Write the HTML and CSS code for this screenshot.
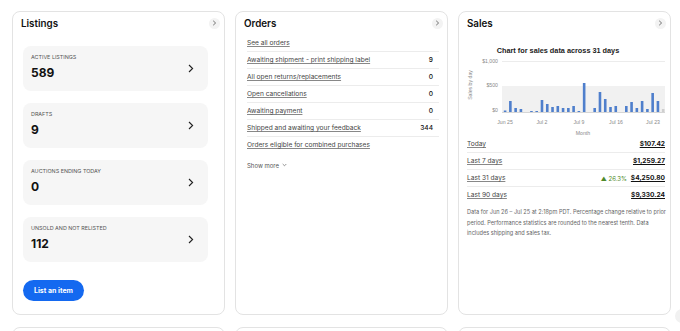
FILE: index.html
```html
<!DOCTYPE html>
<html lang="en">
<head>
    <meta charset="UTF-8">
    <meta name="viewport" content="width=device-width, initial-scale=1.0">
    <title>Seller Hub Overview</title>
    <link rel="stylesheet" href="styles.css">
</head>

<body>
    <div class="dashboard">
        <!-- Listings -->
        <section class="card card-listings">
            <div class="card-header">
                <h2>Listings</h2>
                <span class="round-btn"><svg width="5" height="6" viewBox="0 0 5 6"><path d="M1.2 0.8 L3.6 3 L1.2 5.2" fill="none" stroke="#666" stroke-width="0.9"/></svg></span>
            </div>

            <div class="tiles">
                <a class="tile" href="#">
                    <div>
                        <div class="tile-label">Active listings</div>
                        <div class="tile-value">589</div>
                    </div>
                    <svg class="tile-arrow" width="6" height="9" viewBox="0 0 6 9"><path d="M1 1 L4.6 4.5 L1 8" fill="none" stroke="#222" stroke-width="1.1"/></svg>
                </a>
                <a class="tile" href="#">
                    <div>
                        <div class="tile-label">Drafts</div>
                        <div class="tile-value">9</div>
                    </div>
                    <svg class="tile-arrow" width="6" height="9" viewBox="0 0 6 9"><path d="M1 1 L4.6 4.5 L1 8" fill="none" stroke="#222" stroke-width="1.1"/></svg>
                </a>
                <a class="tile" href="#">
                    <div>
                        <div class="tile-label">Auctions ending today</div>
                        <div class="tile-value">0</div>
                    </div>
                    <svg class="tile-arrow" width="6" height="9" viewBox="0 0 6 9"><path d="M1 1 L4.6 4.5 L1 8" fill="none" stroke="#222" stroke-width="1.1"/></svg>
                </a>
                <a class="tile" href="#">
                    <div>
                        <div class="tile-label">Unsold and not relisted</div>
                        <div class="tile-value">112</div>
                    </div>
                    <svg class="tile-arrow" width="6" height="9" viewBox="0 0 6 9"><path d="M1 1 L4.6 4.5 L1 8" fill="none" stroke="#222" stroke-width="1.1"/></svg>
                </a>
            </div>

            <button class="primary-btn">List an item</button>
        </section>

        <!-- Orders -->
        <section class="card card-orders">
            <div class="card-header">
                <h2>Orders</h2>
                <span class="round-btn"><svg width="5" height="6" viewBox="0 0 5 6"><path d="M1.2 0.8 L3.6 3 L1.2 5.2" fill="none" stroke="#666" stroke-width="0.9"/></svg></span>
            </div>

            <ul class="rows">
                <li><a href="#">See all orders</a></li>
                <li><a href="#">Awaiting shipment - print shipping label</a><span class="num">9</span></li>
                <li><a href="#">All open returns/replacements</a><span class="num">0</span></li>
                <li><a href="#">Open cancellations</a><span class="num">0</span></li>
                <li><a href="#">Awaiting payment</a><span class="num">0</span></li>
                <li><a href="#">Shipped and awaiting your feedback</a><span class="num">344</span></li>
                <li><a href="#">Orders eligible for combined purchases</a></li>
            </ul>
            <div class="show-more">Show more <svg width="5" height="4" viewBox="0 0 5 4"><path d="M0.7 1 L2.5 2.8 L4.3 1" fill="none" stroke="#666" stroke-width="0.7"/></svg></div>
        </section>

        <!-- Sales -->
        <section class="card card-sales">
            <div class="card-header">
                <h2>Sales</h2>
                <span class="round-btn"><svg width="5" height="6" viewBox="0 0 5 6"><path d="M1.2 0.8 L3.6 3 L1.2 5.2" fill="none" stroke="#666" stroke-width="0.9"/></svg></span>
            </div>

            <svg class="chart" width="211" height="96" viewBox="0 0 211 96">
                <text x="99" y="12.6" class="chart-title" text-anchor="middle">Chart for sales data across 31 days</text>
                <line x1="43" y1="21.5" x2="206" y2="21.5" stroke="#ececec" stroke-width="1"/>
                <rect x="43" y="46" width="163" height="26" fill="#f1f1f1"/>
                <text x="39" y="23" class="axis" text-anchor="end">$1,000</text>
                <text x="39" y="47" class="axis" text-anchor="end">$500</text>
                <text x="39" y="72" class="axis" text-anchor="end">$0</text>
                <text class="axis" text-anchor="middle" transform="translate(13 45) rotate(-90)">Sales by day</text>
                <g id="bars"></g>
                <line x1="43" y1="72.5" x2="206" y2="72.5" stroke="#d6d6d6" stroke-width="1"/>
                <text x="46" y="84" class="axis" text-anchor="middle">Jun 25</text>
                <text x="83" y="84" class="axis" text-anchor="middle">Jul 2</text>
                <text x="120" y="84" class="axis" text-anchor="middle">Jul 9</text>
                <text x="157" y="84" class="axis" text-anchor="middle">Jul 16</text>
                <text x="194" y="84" class="axis" text-anchor="middle">Jul 23</text>
                <text x="124" y="95" class="axis" text-anchor="middle">Month</text>
            </svg>

            <ul class="rows sales-rows">
                <li><a href="#">Today</a><span class="amount">$107.42</span></li>
                <li><a href="#">Last 7 days</a><span class="amount">$1,259.27</span></li>
                <li><a href="#">Last 31 days</a><span class="trend">&#9650; 26.3%</span><span class="amount">$4,250.80</span></li>
                <li><a href="#">Last 90 days</a><span class="amount">$9,330.24</span></li>
            </ul>
            <p class="footnote">Data for Jun 26 &ndash; Jul 25 at 2:18pm PDT. Percentage change relative to prior period. Performance statistics are rounded to the nearest tenth. Data includes shipping and sales tax.</p>
        </section>

        <section class="card card-next"></section>
        <section class="card card-next"></section>
        <section class="card card-next"></section>
    </div>

    <span class="float-btn"></span>

    <script>
        // daily sales in pixels of bar height
        const days = [1.5, 11, 4, 3, 0, 1, 1, 12, 8, 5, 6, 4, 4, 6, 1, 29, 0, 4, 20, 13, 5, 6, 0, 6, 10, 4, 11, 3, 19, 11, 3];
        const bars = document.getElementById('bars');
        days.forEach((h, i) => {
            if (!h) return;
            const r = document.createElementNS('http://www.w3.org/2000/svg', 'rect');
            r.setAttribute('x', (44.8 + i * 5.27).toFixed(2));
            r.setAttribute('y', 72 - h);
            r.setAttribute('width', 2.6);
            r.setAttribute('height', h);
            r.setAttribute('fill', i === days.length - 1 ? '#cfcfcf' : '#4f7fcc');
            bars.appendChild(r);
        });
    </script>
</body>
</html>
```

FILE: styles.css
```css
/* Page */
body {
    margin: 0;
    padding: 11px 0 0 12px;
    background-color: #fff;
    font-family: "Inter", "Liberation Sans", sans-serif;
    color: #111;
    overflow: hidden;
}

.dashboard {
    display: grid;
    grid-template-columns: repeat(3, 213px);
    grid-template-rows: 304px 60px;
    column-gap: 10px;
    row-gap: 12px;
}

/* Cards */
.card {
    border: 1px solid #e3e3e3;
    border-radius: 8px;
    background-color: #fff;
    box-sizing: border-box;
}

.card-header {
    display: flex;
    justify-content: space-between;
    align-items: center;
    height: 22px;
    padding: 0 4px 0 8px;
}

.card-header h2 {
    margin: 0;
    font-size: 9.8px;
    font-weight: 600;
    color: #111;
}

.round-btn {
    width: 11px;
    height: 11px;
    border-radius: 50%;
    background-color: #f3f3f3;
    display: flex;
    justify-content: center;
    align-items: center;
}

/* Listings tiles */
.tiles {
    display: flex;
    flex-direction: column;
    gap: 12px;
    margin: 12px 16px 0 10px;
}

.tile {
    display: flex;
    justify-content: space-between;
    align-items: center;
    height: 45px;
    box-sizing: border-box;
    padding: 0 14px 0 8px;
    border-radius: 8px;
    background-color: #f6f6f6;
    text-decoration: none;
    color: #111;
}

.tile-label {
    font-size: 5.4px;
    line-height: 7px;
    text-transform: uppercase;
    color: #555;
    margin-top: -3px;
}

.tile-value {
    font-size: 12px;
    line-height: 14px;
    font-weight: 700;
    margin-top: 5px;
}

.primary-btn {
    display: block;
    margin: 18px 0 0 10px;
    width: 61px;
    height: 21px;
    padding: 0;
    border: none;
    border-radius: 11px;
    background-color: #1469f0;
    color: #fff;
    font-family: inherit;
    font-size: 7px;
    font-weight: 700;
    cursor: pointer;
}

/* Link rows */
.rows {
    list-style: none;
    margin: 1px 8px 0 11px;
    padding: 0;
}

.rows li {
    display: flex;
    align-items: center;
    height: 16px;
    border-bottom: 1px solid #ececec;
    font-size: 6.6px;
}

.rows li:last-child {
    border-bottom: none;
}

.rows a {
    flex: 1;
    color: #444;
    text-decoration: underline;
    text-decoration-color: #888;
    text-underline-offset: 1px;
}

.rows .num {
    padding-right: 6px;
    color: #111;
    font-weight: 500;
}

.show-more {
    display: flex;
    align-items: center;
    gap: 3px;
    margin: 5px 0 0 11px;
    height: 14px;
    font-size: 6px;
    color: #555;
}

/* Sales */
.chart {
    display: block;
    margin-top: 6px;
    font-family: "Liberation Sans", Arial, sans-serif;
}

.chart-title {
    font-size: 7.3px;
    font-weight: 700;
    fill: #222;
}

.axis {
    font-size: 5.2px;
    fill: #8a8a8a;
}

.sales-rows {
    margin: 0 5px 0 8px;
}

.sales-rows .amount {
    font-weight: 700;
    color: #111;
    text-decoration: underline;
    text-underline-offset: 1px;
}

.sales-rows .trend {
    margin-right: 4px;
    color: #4e8a2a;
    font-size: 6px;
}

.footnote {
    margin: 4px 2px 0 8px;
    font-size: 5.6px;
    line-height: 10.5px;
    color: #666;
}

.float-btn {
    position: fixed;
    left: 675px;
    top: 309px;
    width: 14px;
    height: 14px;
    border-radius: 50%;
    background-color: #f1f1f1;
}
```
